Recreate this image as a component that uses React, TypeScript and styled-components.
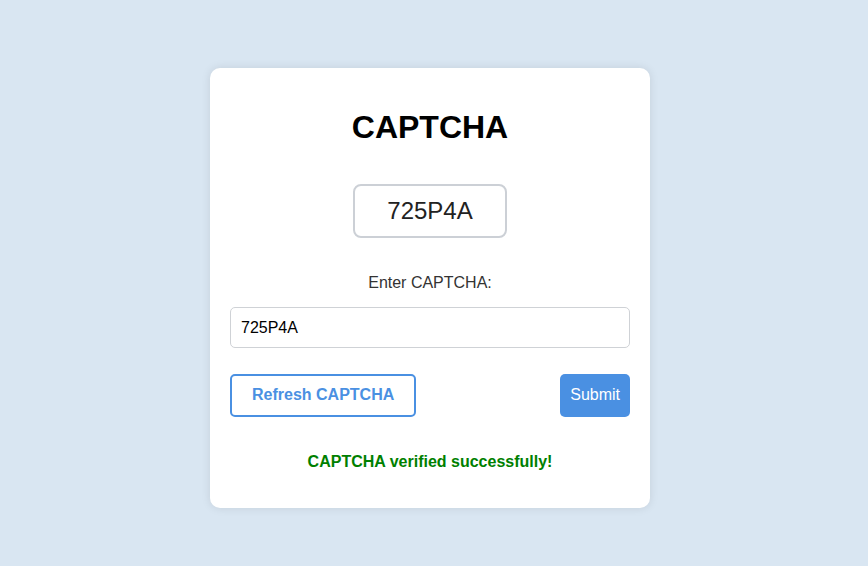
import React from "react";
import styled, { createGlobalStyle } from "styled-components";

const Global = createGlobalStyle`
  html, body { margin: 0; padding: 0; }
  body {
    background: #d9e6f2;
    font-family: "Liberation Sans", Arial, sans-serif;
  }
`;

const Page = styled.div`
  min-height: 566px;
  box-sizing: border-box;
  display: flex;
  justify-content: center;
  align-items: flex-start;
  padding: 68px 8px 0 0;
`;

const Card = styled.div`
  width: 440px;
  height: 440px;
  box-sizing: border-box;
  background: #ffffff;
  border-radius: 10px;
  box-shadow: 0 0 10px rgba(0, 0, 0, 0.1);
  padding: 20px;
  display: flex;
  flex-direction: column;
  align-items: center;
`;

const Title = styled.h1`
  margin: 21px 0 0;
  font-size: 32px;
  line-height: 37px;
  font-weight: 700;
  color: #000;
`;

const CaptchaBox = styled.div`
  margin-top: 38px;
  height: 54px;
  box-sizing: border-box;
  padding: 0 32px;
  border: 2px solid #ccd0d6;
  border-radius: 8px;
  display: flex;
  align-items: center;
  font-size: 24px;
  color: #222;
`;

const Label = styled.label`
  margin-top: 36px;
  font-size: 16px;
  line-height: 18px;
  color: #333;
`;

const Input = styled.input`
  margin-top: 15px;
  width: 400px;
  height: 41px;
  box-sizing: border-box;
  border: 1px solid #cfd2d6;
  border-radius: 5px;
  padding: 0 10px;
  font-family: "Liberation Sans", Arial, sans-serif;
  font-size: 16px;
  color: #000;
  outline: none;
`;

const ButtonRow = styled.div`
  margin-top: 26px;
  width: 400px;
  display: flex;
  justify-content: space-between;
`;

const Button = styled.button<{ $primary?: boolean }>`
  height: 43px;
  box-sizing: border-box;
  border-radius: 5px;
  font-family: "Liberation Sans", Arial, sans-serif;
  font-size: 16px;
  cursor: pointer;
  padding: ${(p) => (p.$primary ? "0 10px 2px" : "0 20px 2px")};
  font-weight: ${(p) => (p.$primary ? 400 : 700)};
  color: ${(p) => (p.$primary ? "#ffffff" : "#4a90e2")};
  background: ${(p) => (p.$primary ? "#4a90e2" : "#ffffff")};
  border: ${(p) => (p.$primary ? "none" : "2px solid #4a90e2")};
`;

const Message = styled.p`
  margin: 36px 0 0;
  font-size: 16px;
  line-height: 18px;
  font-weight: 700;
  color: #008000;
`;

export default function App() {
  return (
    <>
      <Global />
      <Page>
        <Card>
          <Title>CAPTCHA</Title>
          <CaptchaBox>725P4A</CaptchaBox>
          <Label htmlFor="captcha-input">Enter CAPTCHA:</Label>
          <Input id="captcha-input" defaultValue="725P4A" />
          <ButtonRow>
            <Button>Refresh CAPTCHA</Button>
            <Button $primary>Submit</Button>
          </ButtonRow>
          <Message>CAPTCHA verified successfully!</Message>
        </Card>
      </Page>
    </>
  );
}
